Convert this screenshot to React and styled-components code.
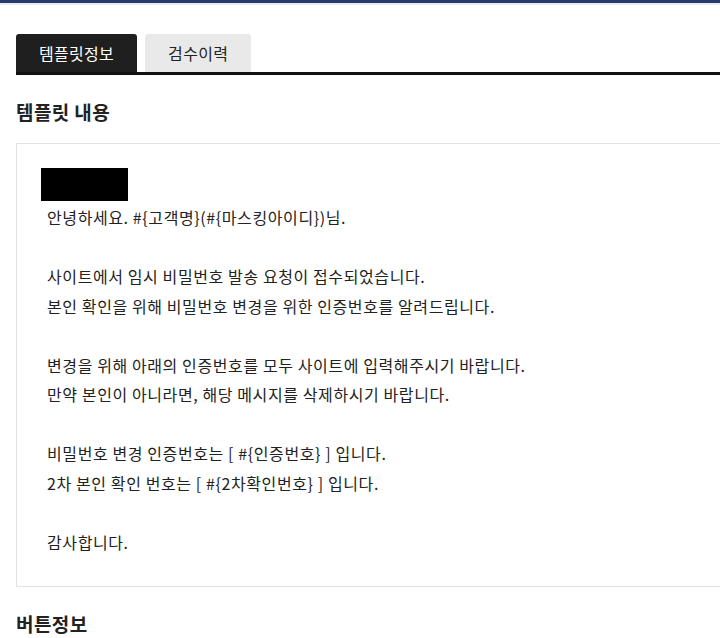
import React from 'react';
import styled, { createGlobalStyle } from 'styled-components';

const GlobalStyle = createGlobalStyle`
  html, body {
    margin: 0;
    padding: 0;
    background: #fff;
    overflow: hidden;
  }
  body {
    font-family: "Noto Sans CJK KR", "Noto Sans", sans-serif;
    color: #222;
  }
`;

const TopBar = styled.div`
  height: 3px;
  background: #26396a;
  border-bottom: 2px solid #e9eaef;
`;

const Page = styled.div`
  width: 760px;
  padding: 29px 0 0 16px;
`;

const TabBar = styled.div`
  display: flex;
  gap: 8px;
  border-bottom: 3px solid #111;
`;

const Tab = styled.button`
  height: 38px;
  padding: 0 23px;
  border: none;
  border-radius: 3px 3px 0 0;
  font-family: inherit;
  font-size: 16px;
  letter-spacing: 0.3px;
  line-height: 38px;
  background: ${p => (p.$active ? '#1f1f1f' : '#e9e9e9')};
  color: ${p => (p.$active ? '#fff' : '#222')};
  cursor: pointer;
`;

const SectionTitle = styled.h2`
  margin: 0;
  font-size: 19px;
  font-weight: 700;
  letter-spacing: 0.4px;
  line-height: 26px;
  color: #222;
  padding-top: ${p => p.$top || 0}px;
`;

const ContentBox = styled.div`
  margin-top: 18px;
  border: 1px solid #e2e2e2;
  padding: 24px 24px 29px;
`;

const Masked = styled.div`
  width: 87px;
  height: 33px;
  background: #000;
`;

const Message = styled.div`
  margin: 2px 0 0 6px;
  font-size: 16px;
  letter-spacing: 0.6px;
  line-height: 29.5px;
  white-space: pre-line;
  color: #222;
`;

const message = `안녕하세요. #{고객명}(#{마스킹아이디})님.

사이트에서 임시 비밀번호 발송 요청이 접수되었습니다.
본인 확인을 위해 비밀번호 변경을 위한 인증번호를 알려드립니다.

변경을 위해 아래의 인증번호를 모두 사이트에 입력해주시기 바랍니다.
만약 본인이 아니라면, 해당 메시지를 삭제하시기 바랍니다.

비밀번호 변경 인증번호는 [ #{인증번호} ] 입니다.
2차 본인 확인 번호는 [ #{2차확인번호} ] 입니다.

감사합니다.`;

export default function App() {
  return (
    <>
      <GlobalStyle />
      <TopBar />
      <Page>
        <TabBar>
          <Tab $active>템플릿정보</Tab>
          <Tab>검수이력</Tab>
        </TabBar>
        <SectionTitle $top={24}>템플릿 내용</SectionTitle>
        <ContentBox>
          <Masked />
          <Message>{message}</Message>
        </ContentBox>
        <SectionTitle $top={24}>버튼정보</SectionTitle>
      </Page>
    </>
  );
}
